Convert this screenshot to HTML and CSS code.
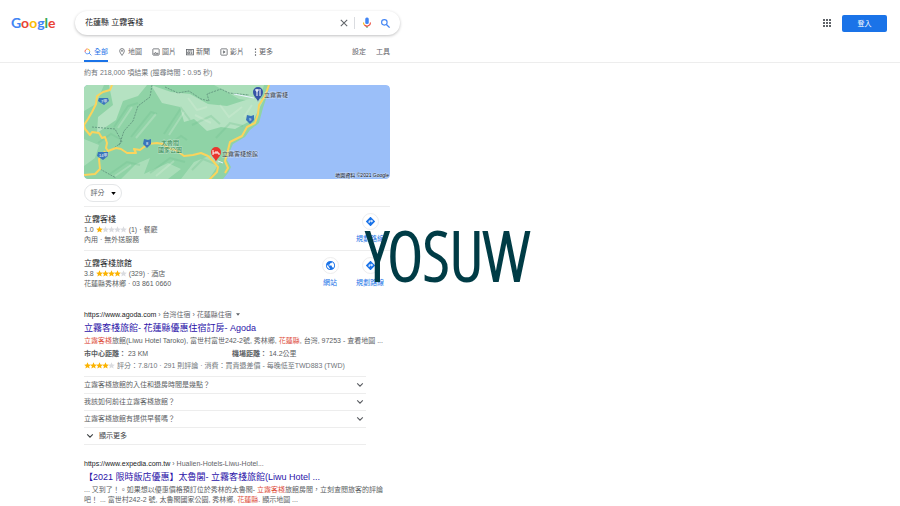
FILE: index.html
```html
<!DOCTYPE html>
<html lang="zh-TW">
<head>
  <meta charset="UTF-8">
  <meta name="viewport" content="width=device-width, initial-scale=1.0">
  <title>花蓮縣 立霧客棧 - Google 搜尋</title>
  <link rel="stylesheet" href="styles.css">
</head>
<body>
  <!-- shared icons -->
  <svg class="sprite" aria-hidden="true">
    <symbol id="star" viewBox="0 0 12 12"><path d="M6 .5l1.7 3.7 4 .4-3 2.7.9 4L6 9.200l-3.600 2.100.9-4-3-2.700 4-.4z"/></symbol>
    <symbol id="chevron" viewBox="0 0 10 10"><path d="M1.500 3L5 6.500 8.500 3" fill="none" stroke="currentColor" stroke-width="1.400"/></symbol>
    <symbol id="directions" viewBox="0 0 24 24"><path fill="#1a73e8" d="M21.700 11.300l-9-9a1 1 0 0 0-1.400 0l-9 9a1 1 0 0 0 0 1.400l9 9a1 1 0 0 0 1.400 0l9-9a1 1 0 0 0 0-1.400zM14 14.500V12h-4v3H8v-4a1 1 0 0 1 1-1h5V7.500l3.500 3.500z"/></symbol>
    <symbol id="globe" viewBox="0 0 24 24"><path fill="#1a73e8" d="M12 2a10 10 0 1 0 0 20 10 10 0 0 0 0-20zm-1 17.900A8 8 0 0 1 4.200 10.200L9 15v1a2 2 0 0 0 2 2zm6.900-2.500A2 2 0 0 0 16 16h-1v-3a1 1 0 0 0-1-1H8v-2h2a1 1 0 0 0 1-1V7h2a2 2 0 0 0 2-2v-.4a8 8 0 0 1 2.900 12.800z"/></symbol>
  </svg>

  <header class="header">
    <div class="topbar">
      <a class="logo" href="#"><span class="blue">G</span><span class="red">o</span><span class="yellow">o</span><span class="blue">g</span><span class="green">l</span><span class="red">e</span></a>
      <form class="search">
        <input type="text" aria-label="搜尋" value="花蓮縣 立霧客棧">
        <button type="button" class="clear" aria-label="清除">
          <svg viewBox="0 0 10 10" width="8" height="8"><path d="M1 1l8 8M9 1L1 9" stroke="#5f6368" stroke-width="1.300"/></svg>
        </button>
        <button type="button" aria-label="語音搜尋">
          <svg viewBox="0 0 24 24" width="12" height="12"><rect x="8.500" y="1" width="7" height="13" rx="3" fill="#4285f4"/><path d="M11 18h2v4h-2z" fill="#34a853"/><path d="M5 11a7 7 0 0 0 2 5" fill="none" stroke="#fbbc04" stroke-width="2.200"/><path d="M7 16a7 7 0 0 0 12-5" fill="none" stroke="#ea4335" stroke-width="2.200"/></svg>
        </button>
        <button type="submit" aria-label="Google 搜尋">
          <svg viewBox="0 0 24 24" width="11" height="11"><circle cx="9.500" cy="9.500" r="6" fill="none" stroke="#4285f4" stroke-width="2.500"/><path d="M14 14l7 7" stroke="#4285f4" stroke-width="3"/></svg>
        </button>
      </form>
      <div class="account">
        <button class="apps" aria-label="Google 應用程式">
          <svg viewBox="0 0 16 16" width="8" height="8" fill="#5f6368"><path d="M0 0h4v4H0zM6 0h4v4H6zM12 0h4v4h-4zM0 6h4v4H0zM6 6h4v4H6zM12 6h4v4h-4zM0 12h4v4H0zM6 12h4v4H6zM12 12h4v4h-4z"/></svg>
        </button>
        <a class="signin" href="#">登入</a>
      </div>
    </div>
    <nav class="tabs">
      <a class="active" href="#">
        <svg viewBox="0 0 14 14"><path d="M2.200 7.500A4 4 0 0 1 6 1.800" stroke="#ea4335"/><path d="M6 1.800a4 4 0 0 1 4 4" stroke="#fbbc04"/><path d="M10 5.800A4 4 0 0 1 2.200 7.500M9 9l4 4" stroke="#4285f4"/></svg>
        全部</a>
      <a href="#">
        <svg viewBox="0 0 14 14"><path d="M7 13C5 10 3 7.500 3 5a4 4 0 0 1 8 0c0 2.500-2 5-4 8z"/><circle cx="7" cy="5" r="1"/></svg>
        地圖</a>
      <a href="#">
        <svg viewBox="0 0 14 14"><rect x="1.500" y="1.500" width="11" height="11" rx="1"/><path d="M3 10.500l3-3 2 2 1-1 2 2z"/></svg>
        圖片</a>
      <a href="#">
        <svg viewBox="0 0 14 14"><rect x="1" y="2.500" width="12" height="9.500"/><path d="M3 5h8M3 7h3v3H3zM8 7.500h3M8 9.500h3"/></svg>
        新聞</a>
      <a href="#">
        <svg viewBox="0 0 14 14"><rect x="1.500" y="1.500" width="11" height="11" rx="1"/><path d="M6 5l3 2-3 2z"/></svg>
        影片</a>
      <a class="more" href="#">
        <svg viewBox="0 0 4 14"><path d="M2 1v2.500M2 6v2.500M2 11v2.500"/></svg>
        更多</a>
      <a class="settings" href="#">設定</a>
      <a href="#">工具</a>
    </nav>
  </header>

  <main class="content">
    <p class="stats">約有 218,000 項結果 (搜尋時間：0.95 秒)</p>

    <a class="map" href="#" aria-label="地圖">
      <svg viewBox="0 0 306 94">
        <rect width="306" height="94" fill="#9bbff9"/>
        <path d="M0 0H186L182 14 179 23 175 38 166 45 161 52 149 59 145 68 143 75 147 82 144 88 139 94H0z" fill="#8fd3a6"/>
        <g fill="#b5e2c2">
          <path d="M25 0h38l-9 11-15 5-7 19-19 13 1-16 15-12z"/>
          <path d="M67 0l20 7 19 2 18 10 19 2 25-8 12 1-10 20-19 10-14-2-14 4-13-12-10 3-4-15-18-4z"/>
          <path d="M0 0h20l-8 19-12 7zM0 54l15 6-4 13-11 8zM37 94l15-15 14-6-6 16 24-11 13 6-13 10z" opacity=".7"/>
          <path d="M97 94l13-17 17-7 9 7-11 17zM130 0h50l-5 17-20-3-14-8z" opacity=".7"/>
        </g>
        <g fill="none" stroke="#70bf8e" stroke-width="2" opacity=".3">
          <path d="M30 42l14-21 10-3M47 52l20-25 6 2M80 49l17-26 9 12M108 40l19-9 9 8M26 89l17-12 13 3M66 88l20-15 15 4M108 85l11-11 15 6M14 58l13-9 9 5M132 53l14-15 13 3M83 61l14-10 6 4"/>
        </g>
        <g fill="none" stroke="#d9f0dc" stroke-width="2" opacity=".3">
          <path d="M34 43l14-21M52 53l20-24M85 50l15-23M104 13l9 12 10-3M136 20l9 12 13-10M72 91l18-15M31 91l16-11M111 30l16 8M160 32l8-12"/>
        </g>
        <path d="M68 0l-2 12-12 9-5 15-9 10-5 15M81 2l13 6 11-2 12 8 8 2-2-7 14-5 8 4 20 2M8 42l23 2 7 13-8 6M16 84l16 9" fill="none" stroke="#679c83" stroke-dasharray="2 1"/>
        <path d="M150 9l20 4M134 76l5 2" fill="none" stroke="#eaf3ff"/>
        <g fill="none" stroke="#fbd45c" stroke-width="2" stroke-linejoin="round">
          <path d="M28 0l-2 5-7 2-6 4-1 8-4 8-4 7-4 6 1 4 5 6 2-3 7 1 3 5 3-1 2 6-1 5 2 3 8-3 5 1 6 4 9 0-2-4 6 1 4-3 4-3 9-1 6 1 7 5 6 1 8 6 9-1 8-2 7 3 5 5 5 6-1 5-8 8"/>
          <path d="M21 66l-6 8 1 10-5 5-11 1M185 0l-4 11-6 9-1 9-3 9-8 4-5 9-12 6-3 12-2 7 3 7-3 5"/>
        </g>
        <g fill="#3974ba">
          <path d="M15 13h9l1 3-5 4-6-4zM14 67h10v4l-5 4-6-4zM60 54l4 1 3-1v5l-4 4-4-4zM163 30l4 1 3-1v5l-4 4-4-4z"/>
        </g>
        <g class="shield-text"><text x="17" y="18">7甲</text><text x="15" y="72">14甲</text><text x="62" y="60">8</text><text x="165" y="36">9</text></g>
        <path d="M132 77c0-3-5-5-5-10a5 5 0 0 1 10 0c0 5-5 7-5 10z" fill="#e9362e"/>
        <path d="M129 65v5M129 68h6v2M131 67h3" stroke="#fff" fill="none"/>
        <path d="M174 17c0-3-5-5-5-10a5 5 0 0 1 10 0c0 5-5 7-5 10z" fill="#3754a6"/>
        <path d="M172 4v2h2V4M173 4v7M176 4v7" stroke="#fff" fill="none"/>
        <text x="180" y="12">立霧客棧</text>
        <text x="138" y="71">立霧客棧旅館</text>
        <g class="park"><text x="77" y="60">太魯閣</text><text x="74" y="67">國家公園</text></g>
        <text class="credit" x="305" y="92">地圖資料 ©2021 Google</text>
      </svg>
    </a>

    <button class="chip">評分 <svg viewBox="0 0 6 4" width="5" height="3"><path d="M0 0h6L3 4z"/></svg></button>

    <section class="places">
      <article class="place">
        <div class="info">
          <h3>立霧客棧</h3>
          <p class="rating">1.0 <span class="stars"><svg><use href="#star"/></svg><svg class="off"><use href="#star"/></svg><svg class="off"><use href="#star"/></svg><svg class="off"><use href="#star"/></svg><svg class="off"><use href="#star"/></svg></span> (1) · 餐廳</p>
          <p>內用 · 無外送服務</p>
        </div>
        <a class="action" href="#"><span><svg><use href="#directions"/></svg></span>規劃路線</a>
      </article>
      <article class="place">
        <div class="info">
          <h3>立霧客棧旅館</h3>
          <p class="rating">3.8 <span class="stars"><svg><use href="#star"/></svg><svg><use href="#star"/></svg><svg><use href="#star"/></svg><svg><use href="#star"/></svg><svg class="off"><use href="#star"/></svg></span> (329) · 酒店</p>
          <p>花蓮縣秀林鄉 · 03 861 0660</p>
        </div>
        <a class="action" href="#"><span><svg><use href="#globe"/></svg></span>網站</a>
        <a class="action" href="#"><span><svg><use href="#directions"/></svg></span>規劃路線</a>
      </article>
    </section>

    <article class="result">
      <p class="url">https://www.agoda.com <span>› 台灣住宿 › 花蓮縣住宿</span> <svg viewBox="0 0 6 4" width="4" height="3"><path d="M0 0h6L3 4z"/></svg></p>
      <h3><a href="#">立霧客棧旅館- 花蓮縣優惠住宿訂房- Agoda</a></h3>
      <p class="snippet"><em>立霧客棧</em>旅館(Liwu Hotel Taroko), 富世村富世242-2號, 秀林鄉, <em>花蓮縣</em>, 台灣, 97253 - 查看地圖 ...</p>
      <div class="facts">
        <p><b>市中心距離：</b> 23 KM</p>
        <p><b>機場距離：</b> 14.2公里</p>
      </div>
      <p class="score"><span class="stars"><svg><use href="#star"/></svg><svg><use href="#star"/></svg><svg><use href="#star"/></svg><svg><use href="#star"/></svg><svg class="off"><use href="#star"/></svg></span> 評分：7.8/10 · 291 則評論 · 消費：買貴退差價 - 每晚低至TWD883 (TWD)</p>
      <div class="faq">
        <button>立霧客棧旅館的入住和退房時間是幾點？ <svg><use href="#chevron"/></svg></button>
        <button>我該如何前往立霧客棧旅館？ <svg><use href="#chevron"/></svg></button>
        <button>立霧客棧旅館有提供早餐嗎？ <svg><use href="#chevron"/></svg></button>
        <button class="show-more"><svg><use href="#chevron"/></svg> 顯示更多</button>
      </div>
    </article>

    <article class="result">
      <p class="url">https://www.expedia.com.tw <span>› Hualien-Hotels-Liwu-Hotel...</span></p>
      <h3><a href="#">【2021 限時飯店優惠】太魯閣- 立霧客棧旅館(Liwu Hotel ...</a></h3>
      <p class="snippet">... 又到了！。如果想以優惠價格預訂位於秀林的太魯閣- <em>立霧客棧</em>旅館房間，立刻查閱旅客的評論<br>吧！ ... 富世村242-2 號, 太魯閣國家公園, 秀林鄉, <em>花蓮縣</em>. 顯示地圖 ...</p>
    </article>
  </main>

  <div class="watermark">YOSUW</div>
</body>
</html>
```
FILE: styles.css
```css
* {
  box-sizing: border-box;
}

body {
  margin: 0;
  position: relative;
  background: #fff;
  color: #5a5d62;
  font-family: "Liberation Sans", "Noto Sans CJK TC", sans-serif;
  font-size: 7px;
  line-height: 10px;
}

h3, p {
  margin: 0;
  font-weight: normal;
}

a {
  color: inherit;
  text-decoration: none;
}

button {
  border: 0;
  padding: 0;
  background: none;
  color: inherit;
  font: inherit;
  cursor: pointer;
}

.sprite {
  position: absolute;
  width: 0;
  height: 0;
}

/* header */
.header {
  border-bottom: 1px solid #ededed;
}

.topbar {
  display: flex;
  align-items: center;
  padding: 11px 13px 0 11px;
}

.logo {
  width: 64px;
  font-family: Lato, sans-serif;
  font-size: 14px;
  font-weight: bold;
  line-height: 24px;
}

.blue { color: #4285f4; }
.red { color: #ea4335; }
.yellow { color: #fbbc05; }
.green { color: #34a853; }

.search {
  display: flex;
  align-items: center;
  width: 325px;
  height: 24px;
  padding: 0 6px 0 10px;
  border-radius: 12px;
  box-shadow: 0 1px 3px rgba(32, 33, 36, 0.28);
}

.search input {
  flex: 1;
  min-width: 0;
  border: 0;
  padding: 0;
  outline: none;
  background: none;
  color: #202124;
  font: inherit;
  font-size: 8px;
}

.search button {
  display: flex;
  justify-content: center;
  width: 18px;
}

.search .clear {
  width: 22px;
  margin-right: 3px;
  padding: 2px 0;
  border-right: 1px solid #dadce0;
}

.account {
  display: flex;
  align-items: center;
  gap: 11px;
  margin-left: auto;
}

.apps svg {
  display: block;
}

.signin {
  width: 45px;
  border-radius: 2px;
  background: #1a73e8;
  color: #fff;
  line-height: 17px;
  text-align: center;
}

.tabs {
  display: flex;
  gap: 10px;
  width: 390px;
  margin-top: 8px;
  padding-left: 84px;
  color: #5f6368;
}

.tabs a {
  display: flex;
  align-items: center;
  gap: 2px;
  height: 19px;
  border-bottom: 2px solid transparent;
}

.tabs .active {
  border-color: #1a73e8;
  color: #1a73e8;
}

.tabs svg {
  width: 8px;
  height: 8px;
  fill: none;
  stroke: #5f6368;
  stroke-width: 1.4;
}

.tabs .more svg {
  width: 3px;
  stroke-width: 2;
}

.tabs .settings {
  margin-left: auto;
}

/* results column */
.content {
  width: 390px;
  padding-left: 84px;
}

.stats {
  padding: 5px 0 7px;
  color: #70757a;
}

.map,
.map svg {
  display: block;
  border-radius: 4px;
  overflow: hidden;
}

.map text {
  fill: #3c4043;
  font-size: 6px;
  paint-order: stroke;
  stroke: rgba(255, 255, 255, 0.4);
  stroke-width: 1px;
}

.map .park text {
  fill: #2f8550;
}

.map .shield-text text {
  fill: #fff;
  font-size: 4px;
  stroke: none;
}

.map .credit {
  font-size: 5px;
  text-anchor: end;
  fill: #111;
}

.chip {
  display: flex;
  align-items: center;
  justify-content: center;
  gap: 6px;
  width: 38px;
  height: 18px;
  margin: 5px 0 4px;
  border: 1px solid #e4e6e8;
  border-radius: 9px;
}

.places {
  padding-bottom: 2px;
}

.place {
  display: flex;
  height: 44px;
  padding-top: 8px;
  border-top: 1px solid #ededed;
}

.info {
  flex: 1;
}

.place h3 {
  color: #202124;
  font-size: 8px;
}

.stars {
  display: inline-flex;
}

.stars svg {
  width: 7px;
  height: 7px;
  margin-right: -1px;
  fill: #fbb300;
}

.stars .off {
  fill: #dadce0;
}

.rating .stars,
.score .stars {
  margin-right: 1px;
  vertical-align: -1px;
}

.action {
  display: flex;
  flex-direction: column;
  align-items: center;
  gap: 4px;
  width: 40px;
  margin-top: -2px;
  color: #1a73e8;
}

.action span {
  display: flex;
  align-items: center;
  justify-content: center;
  width: 17px;
  height: 17px;
  border: 1px solid #ededed;
  border-radius: 50%;
}

.action svg {
  width: 11px;
  height: 11px;
}

.result {
  width: 282px;
  margin-top: 14px;
}

.url {
  color: #202124;
}

.url span {
  color: #5f6368;
}

.url svg {
  margin-left: 2px;
  fill: #5f6368;
  vertical-align: 1px;
}

.result h3 {
  margin-top: 1px;
  color: #2a12a8;
  font-size: 9px;
  line-height: 15px;
  white-space: nowrap;
}

.snippet {
  white-space: nowrap;
}

.snippet em {
  color: #dd4b39;
  font-style: normal;
}

.facts {
  display: grid;
  grid-template-columns: 148px 1fr;
  margin: 3px 0 2px;
}

.score {
  color: #70757a;
}

.faq {
  margin-top: 5px;
  border-bottom: 1px solid #ededed;
}

.faq button {
  display: flex;
  align-items: center;
  justify-content: space-between;
  width: 100%;
  height: 17px;
  padding: 0 2px 0 0;
  border-top: 1px solid #ededed;
}

.faq svg {
  width: 8px;
  height: 8px;
}

.faq .show-more {
  justify-content: flex-start;
  gap: 5px;
  padding-left: 2px;
  color: #3c4043;
}

/* sits over the page */
.watermark {
  position: absolute;
  top: 223px;
  left: 366px;
  color: #003c46;
  font-family: "Open Sans Condensed Light", "Open Sans Condensed", "Liberation Sans Narrow", sans-serif;
  font-size: 68px;
  font-weight: 300;
  line-height: 64px;
  -webkit-text-stroke: 2px #003c46;
  pointer-events: none;
}
```
